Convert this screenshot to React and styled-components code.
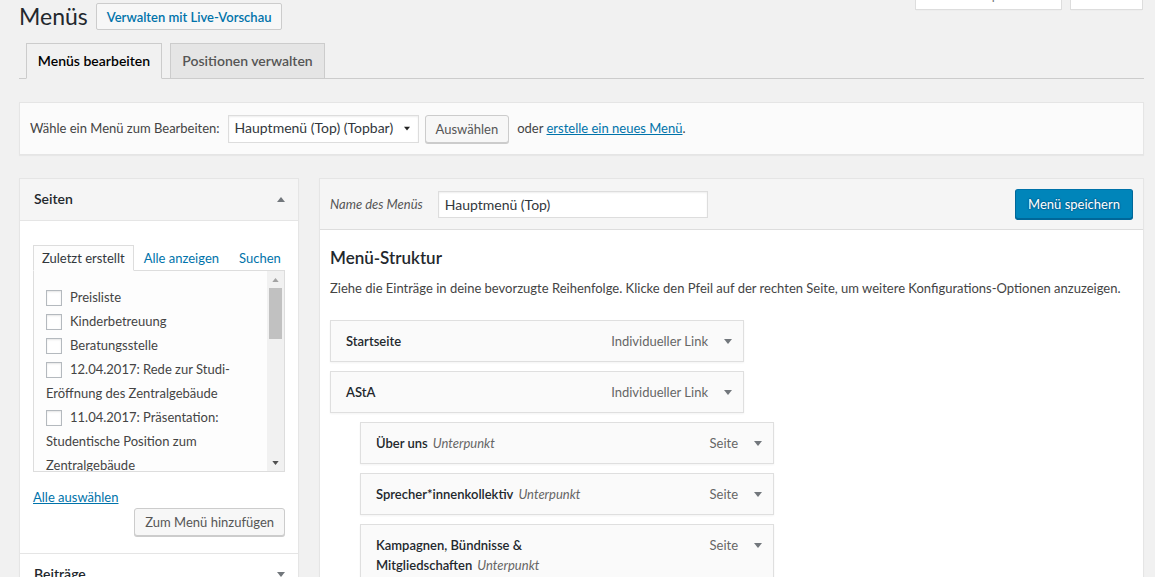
import React from 'react';
import styled, { createGlobalStyle } from 'styled-components';

const GlobalStyle = createGlobalStyle`
  html, body {
    margin: 0;
    padding: 0;
  }
  body {
    background: #f1f1f1;
    color: #444;
    font-family: Lato, "Open Sans", sans-serif;
    font-size: 13px;
    line-height: 1.4em;
    overflow: hidden;
  }
  * {
    box-sizing: border-box;
  }
`;

const pages = [
  'Preisliste',
  'Kinderbetreuung',
  'Beratungsstelle',
  '12.04.2017: Rede zur Studi-Eröffnung des Zentralgebäude',
  '11.04.2017: Präsentation: Studentische Position zum Zentralgebäude',
];

const menuItems = [
  { title: 'Startseite', type: 'Individueller Link', depth: 0 },
  { title: 'AStA', type: 'Individueller Link', depth: 0 },
  { title: 'Über uns', sub: 'Unterpunkt', type: 'Seite', depth: 1 },
  { title: 'Sprecher*innenkollektiv', sub: 'Unterpunkt', type: 'Seite', depth: 1 },
  { title: 'Kampagnen, Bündnisse & Mitgliedschaften', sub: 'Unterpunkt', type: 'Seite', depth: 1 },
];

function Arrow({ up, color = '#72777c', w = 8, h = 5 }) {
  return (
    <svg width={w} height={h} viewBox="0 0 8 5" style={{ display: 'block' }}>
      {up ? <polygon points="0,5 8,5 4,0" fill={color} /> : <polygon points="0,0 8,0 4,5" fill={color} />}
    </svg>
  );
}

export default function App() {
  return (
    <>
      <GlobalStyle />
      <Wrap>
        <HeaderRow>
          <TitleGroup>
            <PageTitle>Menüs</PageTitle>
            <TitleAction>Verwalten mit Live-Vorschau</TitleAction>
          </TitleGroup>
          <ScreenMeta>
            <MetaTab $w={147}>Ansicht anpassen</MetaTab>
            <MetaTab $w={73}>Hilfe</MetaTab>
          </ScreenMeta>
        </HeaderRow>

        <NavTabs>
          <NavTab $active $w={136}>Menüs bearbeiten</NavTab>
          <NavTab $w={155}>Positionen verwalten</NavTab>
        </NavTabs>

        <ManageBar>
          <span>Wähle ein Menü zum Bearbeiten:</span>
          <SelectBox>
            <span>Hauptmenü (Top) (Topbar)</span>
            <Arrow color="#222" w={6} h={5} />
          </SelectBox>
          <Button>Auswählen</Button>
          <span>
            oder <Link href="#">erstelle ein neues Menü</Link>.
          </span>
        </ManageBar>

        <Columns>
          <Accordion>
            <SectionTitle $open>
              Seiten
              <Arrow up />
            </SectionTitle>
            <SectionBody>
              <InnerTabs>
                <InnerTab $active>Zuletzt erstellt</InnerTab>
                <InnerTab>Alle anzeigen</InnerTab>
                <InnerTab>Suchen</InnerTab>
              </InnerTabs>
              <ListBox>
                <ListContent>
                  {pages.map((label) => (
                    <ListItem key={label}>
                      <Check type="checkbox" />
                      {label}
                    </ListItem>
                  ))}
                </ListContent>
                <ScrollBar>
                  <ScrollArrow>
                    <Arrow up color="#a3a3a3" w={7} h={4} />
                  </ScrollArrow>
                  <ScrollTrack>
                    <ScrollThumb />
                  </ScrollTrack>
                  <ScrollArrow>
                    <Arrow color="#505050" w={7} h={4} />
                  </ScrollArrow>
                </ScrollBar>
              </ListBox>
              <ListFooter>
                <Link href="#">Alle auswählen</Link>
                <FooterButtons>
                  <Button>Zum Menü hinzufügen</Button>
                </FooterButtons>
              </ListFooter>
            </SectionBody>
            <SectionTitle>
              Beiträge
              <Arrow />
            </SectionTitle>
          </Accordion>

          <MenuPanel>
            <MenuHeader>
              <NameLabel>Name des Menüs</NameLabel>
              <NameInput defaultValue="Hauptmenü (Top)" />
              <PrimaryButton>Menü speichern</PrimaryButton>
            </MenuHeader>
            <MenuBody>
              <StructureTitle>Menü-Struktur</StructureTitle>
              <Description>
                Ziehe die Einträge in deine bevorzugte Reihenfolge. Klicke den Pfeil auf der rechten Seite, um weitere
                Konfigurations-Optionen anzuzeigen.
              </Description>
              <ItemList>
                {menuItems.map((item) => (
                  <MenuItem key={item.title} $depth={item.depth}>
                    <ItemTitle>
                      <strong>{item.title}</strong>
                      {item.sub && <SubLabel>{item.sub}</SubLabel>}
                    </ItemTitle>
                    <ItemControls>
                      <span>{item.type}</span>
                      <ItemArrow>
                        <Arrow />
                      </ItemArrow>
                    </ItemControls>
                  </MenuItem>
                ))}
              </ItemList>
            </MenuBody>
          </MenuPanel>
        </Columns>
      </Wrap>
    </>
  );
}

const Wrap = styled.div`
  height: 577px;
  overflow: hidden;
  padding: 0 11px 0 19px;
`;

const HeaderRow = styled.div`
  display: flex;
  justify-content: space-between;
  align-items: flex-start;
  padding-top: 2px;
`;

const TitleGroup = styled.div`
  display: flex;
  align-items: center;
  gap: 8px;
`;

const PageTitle = styled.h1`
  margin: 0;
  font-size: 23px;
  font-weight: 400;
  line-height: 29px;
  color: #23282d;
`;

const TitleAction = styled.button`
  height: 27px;
  padding: 0 10px;
  border: 1px solid #ccc;
  border-radius: 2px;
  background: #f7f7f7;
  color: #0073aa;
  font-family: inherit;
  font-size: 13px;
  font-weight: 600;
`;

const ScreenMeta = styled.div`
  display: flex;
  gap: 8px;
  margin-top: -20px;
  margin-right: 1px;
`;

const MetaTab = styled.div`
  width: ${(p) => p.$w}px;
  height: 28px;
  padding: 3px 0 0 16px;
  line-height: 20px;
  background: #fff;
  border: 1px solid #ddd;
  border-top: none;
  box-shadow: 0 1px 1px -1px rgba(0, 0, 0, 0.1);
  color: #72777c;
  white-space: nowrap;
`;

const NavTabs = styled.div`
  display: flex;
  gap: 8px;
  margin-top: 12px;
  padding-left: 7px;
  border-bottom: 1px solid #ccc;
`;

const NavTab = styled.div`
  width: ${(p) => p.$w}px;
  height: 36px;
  margin-bottom: -1px;
  line-height: 34px;
  text-align: center;
  font-size: 14px;
  font-weight: 600;
  white-space: nowrap;
  border: 1px solid #ccc;
  border-bottom-color: ${(p) => (p.$active ? '#f1f1f1' : '#ccc')};
  background: ${(p) => (p.$active ? '#f1f1f1' : '#e5e5e5')};
  color: ${(p) => (p.$active ? '#000' : '#555')};
`;

const ManageBar = styled.div`
  display: flex;
  align-items: center;
  gap: 8px;
  height: 53px;
  margin-top: 23px;
  padding: 0 10px;
  background: #fbfbfb;
  border: 1px solid #e5e5e5;
  box-shadow: 0 1px 1px rgba(0, 0, 0, 0.04);
  color: #444;
  white-space: nowrap;
`;

const SelectBox = styled.div`
  display: flex;
  align-items: center;
  justify-content: space-between;
  width: 191px;
  height: 28px;
  padding: 0 8px 0 6px;
  background: #fff;
  border: 1px solid #ddd;
  box-shadow: inset 0 1px 2px rgba(0, 0, 0, 0.07);
  color: #32373c;
  font-size: 14px;
`;

const Button = styled.button`
  height: 28px;
  padding: 0 10px;
  margin-left: -2px;
  border: 1px solid #ccc;
  border-radius: 3px;
  background: #f7f7f7;
  box-shadow: 0 1px 0 #ccc;
  color: #555;
  font-family: inherit;
  font-size: 13px;
  line-height: 26px;
  white-space: nowrap;
`;

const Link = styled.a`
  color: #0073aa;
  text-decoration: underline;
`;

const Columns = styled.div`
  display: flex;
  align-items: flex-start;
  gap: 20px;
  margin-top: 23px;
`;

const Accordion = styled.div`
  flex: 0 0 280px;
  width: 280px;
  min-width: 0;
  background: #fff;
  border: 1px solid #e5e5e5;
  box-shadow: 0 1px 1px rgba(0, 0, 0, 0.04);
`;

const SectionTitle = styled.div`
  display: flex;
  align-items: center;
  justify-content: space-between;
  height: 42px;
  padding: 0 13px 0 14px;
  background: ${(p) => (p.$open ? '#f5f5f5' : '#fff')};
  border-bottom: 1px solid #e5e5e5;
  color: #23282d;
  font-size: 14px;
  font-weight: 600;
`;

const SectionBody = styled.div`
  padding: 24px 13px 17px 13px;
  border-bottom: 1px solid #e5e5e5;
`;

const InnerTabs = styled.div`
  display: flex;
  white-space: nowrap;
`;

const InnerTab = styled.div`
  position: relative;
  height: 26px;
  margin-bottom: -1px;
  padding: 0 ${(p) => (p.$active ? 8 : 7)}px;
  margin-right: ${(p) => (p.$active ? 2 : 4)}px;
  line-height: 24px;
  border: 1px solid ${(p) => (p.$active ? '#ddd' : 'transparent')};
  border-bottom-color: ${(p) => (p.$active ? '#fdfdfd' : 'transparent')};
  background: ${(p) => (p.$active ? '#fdfdfd' : 'transparent')};
  color: ${(p) => (p.$active ? '#32373c' : '#0073aa')};
`;

const ListBox = styled.div`
  display: flex;
  height: 202px;
  background: #fdfdfd;
  border: 1px solid #ddd;
`;

const ListContent = styled.ul`
  flex: 1;
  margin: 0;
  padding: 14px 8px 0 12px;
  overflow: hidden;
  list-style: none;
`;

const ListItem = styled.li`
  line-height: 24px;
  color: #444;
`;

const Check = styled.input`
  appearance: none;
  display: inline-block;
  width: 16px;
  height: 16px;
  margin: 0 8px 0 0;
  vertical-align: -4px;
  background: #fff;
  border: 1px solid #b4b9be;
  box-shadow: inset 0 1px 2px rgba(0, 0, 0, 0.1);
`;

const ScrollBar = styled.div`
  display: flex;
  flex-direction: column;
  flex: 0 0 17px;
  background: #f1f1f1;
`;

const ScrollArrow = styled.div`
  display: flex;
  align-items: center;
  justify-content: center;
  height: 17px;
`;

const ScrollTrack = styled.div`
  flex: 1;
  padding: 0 2px;
`;

const ScrollThumb = styled.div`
  height: 51px;
  background: #c1c1c1;
`;

const ListFooter = styled.div`
  margin-top: 15px;
  line-height: 21px;
`;

const FooterButtons = styled.div`
  display: flex;
  justify-content: flex-end;
`;

const MenuPanel = styled.div`
  flex: 1;
  min-width: 0;
  background: #fff;
  border: 1px solid #e5e5e5;
  box-shadow: 0 1px 1px rgba(0, 0, 0, 0.04);
`;

const MenuHeader = styled.div`
  display: flex;
  align-items: center;
  height: 51px;
  padding: 0 10px;
  background: #f5f5f5;
  border-bottom: 1px solid #dddddd;
`;

const NameLabel = styled.label`
  font-style: italic;
  color: #555;
  margin-right: 15px;
`;

const NameInput = styled.input`
  width: 270px;
  height: 27px;
  padding: 0 6px;
  background: #fff;
  border: 1px solid #ddd;
  box-shadow: inset 0 1px 2px rgba(0, 0, 0, 0.07);
  color: #32373c;
  font-family: inherit;
  font-size: 14px;
  outline: none;
`;

const PrimaryButton = styled.button`
  margin-left: auto;
  width: 118px;
  height: 30px;
  padding: 0;
  background: #0085ba;
  border: 1px solid;
  border-color: #0073aa #006799 #006799;
  border-radius: 3px;
  box-shadow: 0 1px 0 #006799;
  color: #fff;
  font-family: inherit;
  font-size: 13px;
  text-shadow: 0 -1px 1px #006799, 1px 0 1px #006799, 0 1px 1px #006799, -1px 0 1px #006799;
`;

const MenuBody = styled.div`
  padding: 0 10px 20px;
`;

const StructureTitle = styled.h3`
  margin: 17px 0 0;
  font-size: 17px;
  font-weight: 600;
  line-height: 22px;
  color: #23282d;
`;

const Description = styled.p`
  margin: 10px 0 0;
  line-height: 18px;
  color: #444;
`;

const ItemList = styled.div`
  display: flex;
  flex-direction: column;
  gap: 9px;
  margin-top: 23px;
`;

const MenuItem = styled.div`
  display: flex;
  align-items: flex-start;
  width: 414px;
  margin-left: ${(p) => p.$depth * 30}px;
  padding: 10px 0 10px 15px;
  line-height: 20px;
  background: #fafafa;
  border: 1px solid #dfdfdf;
  box-shadow: 0 1px 2px rgba(0, 0, 0, 0.05);
  color: #23282d;
`;

const ItemTitle = styled.div`
  flex: 0 0 auto;
  width: calc(100% - 169px);

  strong {
    font-weight: 600;
  }
`;

const SubLabel = styled.span`
  margin-left: 5px;
  font-style: italic;
  color: #666;
`;

const ItemControls = styled.div`
  display: flex;
  align-items: center;
  margin-left: auto;
  color: #666;
  white-space: nowrap;
`;

const ItemArrow = styled.span`
  display: flex;
  align-items: center;
  height: 20px;
  margin: 0 11px 0 16px;
`;
